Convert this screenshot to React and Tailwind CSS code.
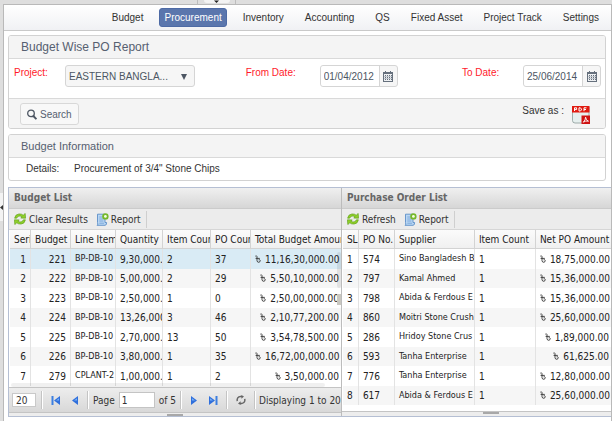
import React from "react";

const nav = ["Budget", "Procurement", "Inventory", "Accounting", "QS", "Fixed Asset", "Project Track", "Settings"];

const budgets = [
  [1, 221, "BP-DB-10", "9,30,000.", 2, 37, "11,16,30,000.00"],
  [2, 222, "BP-DB-10", "5,00,000.", 2, 29, "5,50,10,000.00"],
  [3, 223, "BP-DB-10", "2,50,000.", 1, 0, "2,50,00,000.00"],
  [4, 224, "BP-DB-10", "13,26,000", 3, 46, "2,10,77,200.00"],
  [5, 225, "BP-DB-10", "2,70,000.", 13, 50, "3,54,78,500.00"],
  [6, 226, "BP-DB-10", "3,80,000.", 1, 35, "16,72,00,000.00"],
  [7, 279, "CPLANT-2", "1,00,000.", 1, 2, "3,50,000.00"],
];

const orders = [
  [1, 574, "Sino Bangladesh B", 1, "18,75,000.00"],
  [2, 797, "Kamal Ahmed", 1, "15,36,000.00"],
  [3, 798, "Abida & Ferdous E", 1, "15,36,000.00"],
  [4, 860, "Moitri Stone Crush", 1, "25,60,000.00"],
  [5, 286, "Hridoy Stone Crus", 1, "1,89,000.00"],
  [6, 593, "Tanha Enterprise", 1, "61,625.00"],
  [7, 776, "Tanha Enterprise", 1, "12,80,000.00"],
  [8, 617, "Abida & Ferdous E", 1, "25,60,000.00"],
];

function TakaIcon() {
  return (
    <svg width="6" height="8" viewBox="0 0 6 8" className="mr-1 inline-block align-baseline" fill="none" stroke="#333" strokeWidth="0.9" role="img" aria-label="taka">
      <path d="M0.4 1.2Q1.6 0.2 2 1.6V5.6Q2.2 7.4 3.8 7.3Q5.4 7 5.2 5.4Q4.8 4.2 3.6 4.8M0.6 3.4H4.8" />
    </svg>
  );
}

function Calendar() {
  return (
    <svg width="10" height="11" viewBox="0 0 10 11" aria-hidden="true">
      <path fill="#66707d" d="M0 1h2V0h1v1h4V0h1v1h2v10H0z" />
      <path fill="#eef0f2" d="M1 3H9V10H1z" />
      <path stroke="#66707d" strokeWidth="1" strokeDasharray="1 1" d="M2 4.5H9M2 6.5H9M2 8.5H9" />
      <path stroke="#a3abb5" strokeWidth="0.6" d="M1 5.5H9M1 7.5H9" />
    </svg>
  );
}

function DateField({ id, value }) {
  return (
    <div className="flex h-[22px] rounded-[3px] border border-[#d5d5d5] bg-[#f6f6f6]">
      <input id={id} defaultValue={value} className="w-[58px] rounded-l-[3px] bg-white pl-[3px] text-[10px] text-[#4d5663] outline-none" />
      <button aria-label="Open calendar" className="flex w-[18px] items-center justify-center border-l border-[#d5d5d5]">
        <Calendar />
      </button>
    </div>
  );
}

function RefreshIcon() {
  return (
    <svg width="12" height="12" viewBox="0 0 12 12" aria-hidden="true">
      <g fill="#8fd02a" stroke="#5a9a14" strokeWidth="0.6" strokeLinejoin="round">
        <path d="M0.6 5.2Q1.2 1.2 5 0.9Q7.8 0.8 9.2 2.2L11.2 0.4L11.6 5.2L6.8 5.1L8 3.7Q6 2.4 4.2 3.4Q3.2 4 2.6 5.2z" />
        <path d="M11.4 6.8Q10.8 10.8 7 11.1Q4.2 11.2 2.8 9.8L0.8 11.6L0.4 6.8L5.2 6.9L4 8.3Q6 9.6 7.8 8.6Q8.8 8 9.4 6.8z" />
      </g>
    </svg>
  );
}

function ReportIcon() {
  return (
    <svg width="13" height="13" viewBox="0 0 13 13" aria-hidden="true">
      <path fill="#b9d6f3" stroke="#5c8fc7" strokeWidth="0.9" d="M1.5 1.2H9V9.5H10.6Q10.8 12.2 9 12.3H1Q2.4 11.6 1.5 9.5z" />
      <path stroke="#6f9fd4" strokeWidth="0.8" d="M3.3 4H6M3.3 6H7.4M3.3 8H7.4M3.3 10.2H8" />
      <circle cx="9.4" cy="3.4" r="3.2" fill="#76b82a" />
      <circle cx="9.4" cy="3.4" r="1.4" fill="#f4ffe2" />
    </svg>
  );
}

function Tools({ first }) {
  return (
    <div className="flex h-[21px] items-center border-b border-[#d6d6d6] bg-[#ececec] pl-[5px]">
      <button className="flex items-center gap-[3px]"><RefreshIcon />{first}</button>
      <button className="ml-2 flex items-center gap-[2px]"><ReportIcon />Report</button>
      <span className="ml-[5px] h-[17px] border-l border-[#cfcfcf]" />
    </div>
  );
}

function ListTitle({ children }) {
  return (
    <h2 className="h-[21px] border-b border-[#cbcbcb] bg-linear-to-b from-[#f0f0f0] to-[#d6d6d6] pl-[5px] text-[10px] leading-[20px] font-bold text-[#666]">
      {children}
    </h2>
  );
}

const head = "h-[19px] overflow-hidden border-r border-b border-[#d3d3d3] bg-linear-to-b from-[#fbfbfb] to-[#f0f0f0] p-0 pl-1 text-left font-normal last:border-r-0";
const cell = "overflow-hidden border-r border-[#e3e3e3] p-0 pl-1 last:border-r-0 last:pr-[2px] last:text-right";

function Grid({ widths, titles, rows, selected, rightCols }) {
  return (
    <table className="w-full table-fixed border-separate border-spacing-0 whitespace-nowrap text-[#222]">
      <colgroup>
        {widths.map((w, i) => <col key={i} style={w ? { width: w } : undefined} />)}
      </colgroup>
      <thead>
        <tr>{titles.map((t) => <th key={t} className={head}>{t}</th>)}</tr>
      </thead>
      <tbody>
        {rows.map((r, n) => (
          <tr key={n} className={n === selected ? "h-[20px] bg-[#d9ebf5]" : "odd:h-[20px] even:h-[19px] even:bg-[#f6f6f6]"}>
            {r.map((v, i) => (
              <td key={i} className={rightCols.includes(i) ? cell + " pr-1 text-right" : i === 2 ? cell + " text-[9px]" : cell}>
                {i === r.length - 1 && <TakaIcon />}{v}
              </td>
            ))}
          </tr>
        ))}
      </tbody>
    </table>
  );
}

function PageArrow({ label, bar, flip }) {
  return (
    <button aria-label={label} className="flex w-[10px] justify-center">
      <svg width="10" height="9" viewBox="0 0 10 9" className={flip ? "-scale-x-100" : ""} aria-hidden="true">
        {bar && <path fill="#3c7fe0" d="M0.5 0H2.5V9H0.5z" />}
        <path fill="#2f6fdc" d="M9 0V9L3 4.5z" />
        <path fill="#79b2f5" d="M8 2.2V4.5H5z" />
      </svg>
    </button>
  );
}

function Divider() {
  return <span className="h-[18px] w-[2px] shrink-0 border-l border-[#c4c4c4] bg-white" />;
}

export default function App() {
  return (
    <div className="border-b border-[#bdbdbd] bg-[#dedede] pl-[3px] font-['Liberation_Sans',Arial,sans-serif] text-[10px] text-[#333]">
      <div className="flex h-1 justify-center pr-[184px]">
        <span className="ml-[2px] flex w-[39px] justify-center border-x border-[#bdbdbd]">
          <span className="flex h-[3px] w-[26px] justify-center rounded-b bg-[#f3f3f3]">
            <svg width="5" height="3" viewBox="0 0 5 3" aria-hidden="true"><path d="M0 0.5H5L2.5 3z" fill="#222" /></svg>
          </span>
        </span>
      </div>
      <div className="absolute top-[193px] left-0 flex h-[28px] w-[3px] items-center bg-[#f3f3f3]">
        <svg width="3" height="5" viewBox="0 0 3 5" aria-hidden="true"><path d="M3 0V5L0 2.5z" fill="#333" /></svg>
      </div>
      <main className="border border-b-0 border-[#b9b9b9] bg-white">
        <nav className="flex h-[26px] items-center justify-end gap-[11px] border-b border-[#c9c9c9] bg-linear-to-b from-white to-[#f0f1f4] pr-[7px]">
          {nav.map((n) => (
            <a
              key={n}
              href="#"
              className={n === "Procurement"
                ? "rounded-[3px] border border-[#4d6aa5] bg-[#5a76ad] px-1 leading-[17px] text-white"
                : "px-[5px] leading-[19px]"}
            >
              {n}
            </a>
          ))}
        </nav>

        <div className="flex flex-col gap-[5px] pt-1 pr-[5px] pl-1">
          <section className="overflow-hidden rounded-[3px] border border-[#d2d2d2]">
            <h1 className="h-[23px] border-b border-[#d9d9d9] bg-[#f4f4f4] pl-3 text-[12px] leading-[23px] text-[#566070]">Budget Wise PO Report</h1>
            <div className="grid h-[39px] grid-cols-[15fr_14fr_auto] items-start pt-[6px] pr-1 pl-[5px] text-[#ff1a2b]">
              <div className="flex">
                <label htmlFor="project" className="w-[51px] leading-[16px]">Project:</label>
                <div className="relative">
                  <select id="project" className="h-[22px] w-[130px] appearance-none rounded-[3px] border border-[#d5d5d5] bg-[#f6f6f6] pl-[3px] text-[10px] text-[#4d5663]">
                    <option>EASTERN BANGLA...</option>
                  </select>
                  <svg width="6" height="6" viewBox="0 0 6 6" className="pointer-events-none absolute top-[9px] right-2" aria-hidden="true"><path d="M0 0H6L3 6z" fill="#4d5663" /></svg>
                </div>
              </div>
              <div className="flex">
                <label htmlFor="from" className="w-[74px] leading-[16px]">From Date:</label>
                <DateField id="from" value="01/04/2012" />
              </div>
              <div className="flex">
                <label htmlFor="to" className="w-[61px] leading-[16px]">To Date:</label>
                <DateField id="to" value="25/06/2014" />
              </div>
            </div>
            <div className="flex h-[30px] items-start justify-between border-t border-[#d9d9d9] bg-[#f4f4f4] pt-1 pr-[15px] pl-[11px]">
              <button className="flex h-[22px] items-center gap-[3px] rounded-[3px] border border-[#d8d8d8] bg-[#f8f8f8] px-[6px] text-[#566070]">
                <svg width="10" height="11" viewBox="0 0 10 11" fill="none" stroke="#4d5663" aria-hidden="true"><circle cx="4" cy="4.4" r="3.3" strokeWidth="1.3" /><path d="M6.4 7L9.4 10.2" strokeWidth="1.9" /></svg>
                Search
              </button>
              <div className="flex gap-2">
                <span className="leading-[15px]">Save as :</span>
                <button aria-label="Save as PDF" className="pt-[3px]">
                  <svg width="18" height="18" viewBox="0 0 18 18" aria-hidden="true">
                    <path fill="#e6efee" stroke="#8a9a98" strokeWidth="0.8" d="M0.5 1H17V17H3Q0.5 17 0.5 14.5z" />
                    <path fill="#e01a10" d="M0 0H17.5V6.5H0z" />
                    <g stroke="#fff" strokeWidth="1" fill="none"><path d="M2.5 5V1.8H4.6V3.6H2.5M7 5V1.8H8.4L9.4 3V4L8.4 5zM12 5.2V1.8H14.5M12 3.5H14" /></g>
                    <path fill="#cf1212" d="M9.5 9.5H18V18H9.5z" />
                    <path stroke="#fff" strokeWidth="0.9" fill="none" d="M11.3 16.2Q13.6 14 13.6 11.2Q14 14.6 16.5 15.2Q13.6 14.4 11.3 16.2z" />
                  </svg>
                </button>
              </div>
            </div>
          </section>

          <section className="overflow-hidden rounded-[3px] border border-[#d2d2d2]">
            <h2 className="h-[23px] border-b border-[#d9d9d9] bg-[#f4f4f4] pl-3 text-[11px] leading-[23px] text-[#566070]">Budget Information</h2>
            <dl className="flex h-[22px] pl-[17px] leading-[22px]">
              <dt className="w-[48px]">Details:</dt>
              <dd>Procurement of 3/4" Stone Chips</dd>
            </dl>
          </section>
        </div>

        <div className="mt-[6px] ml-1 flex h-[230px] border-y border-l border-[#b5bfd3] font-['DejaVu_Sans_Condensed','DejaVu_Sans',Tahoma,sans-serif]">
          <section className="flex min-w-0 flex-[333] flex-col overflow-hidden border-r border-[#bcbcbc]">
            <ListTitle>Budget List</ListTitle>
            <Tools first="Clear Results" />
            <div className="relative h-[157px] overflow-hidden pl-[1px]">
              <Grid
                widths={[21, 40, 45, 47, 48, 40, 0]}
                titles={["Seri", "Budget I", "Line Item", "Quantity", "Item Coun", "PO Coun", "Total Budget Amoun"]}
                rows={budgets}
                selected={0}
                rightCols={[0, 1]}
              />
              <span className="absolute top-[22px] right-0 h-[36px] w-1 rounded bg-black/8" />
              <span className="absolute top-[64px] right-0 h-[11px] w-1 bg-[#c9c7c0]" />
              <span className="absolute right-4 bottom-0 left-[2px] h-1 rounded bg-black/6" />
            </div>
            <div className="flex h-[25px] shrink-0 items-center border-t border-[#c4c4c4] bg-linear-to-b from-[#ededed] to-[#d8d8d8] pl-[3px] whitespace-nowrap">
              <input aria-label="Rows per page" defaultValue="20" className="h-[14px] w-[24px] shrink-0 border border-[#c9c9c9] bg-white pl-[3px] text-[10px]" />
              <div className="ml-[5px] flex shrink-0 items-center gap-2">
                <Divider />
                <PageArrow label="First page" bar />
                <PageArrow label="Previous page" />
              </div>
              <div className="ml-2 flex shrink-0 items-center gap-1">
                <Divider />
                <label htmlFor="page">Page</label>
                <input id="page" defaultValue="1" className="h-[16px] w-[36px] border border-[#c4c4c4] bg-white pl-[2px] text-[10px]" />
                <span>of 5</span>
                <Divider />
              </div>
              <div className="ml-2 flex shrink-0 items-center gap-2">
                <PageArrow label="Next page" flip />
                <PageArrow label="Last page" bar flip />
                <Divider />
                <button aria-label="Reload">
                  <svg width="10" height="10" viewBox="0 0 10 10" fill="none" stroke="#666" strokeWidth="1.5" aria-hidden="true">
                    <path d="M1.2 6.2Q0.6 1.8 4.6 1.6H6M8.8 3.8Q9.4 8.2 5.4 8.4H4" />
                    <path d="M5.4 0L8 1.6L5.4 3.8zM4.6 6.2L2 8.4L4.6 10z" fill="#666" stroke="none" />
                  </svg>
                </button>
                <Divider />
              </div>
              <span className="ml-[3px]">Displaying 1 to 20 o</span>
            </div>
            <div className="flex flex-1 items-center justify-center border-t border-[#c4c4c4] bg-[#ededed]">
              <span className="h-[2px] w-4 bg-[#a8a8a8]" />
            </div>
          </section>

          <section className="flex min-w-0 flex-[270] flex-col overflow-hidden">
            <ListTitle>Purchase Order List</ListTitle>
            <Tools first="Refresh" />
            <div className="h-[181px] overflow-hidden pl-[1px]">
              <Grid
                widths={[16, 36, 80, 61, 0]}
                titles={["SL", "PO No.", "Supplier", "Item Count", "Net PO Amount"]}
                rows={orders}
                selected={-1}
                rightCols={[]}
              />
            </div>
            <div className="flex flex-1 items-start justify-center border-t border-[#c4c4c4] bg-[#ededed] pl-[30px]">
              <span className="h-[2px] w-4 bg-[#a8a8a8]" />
            </div>
          </section>
        </div>
        <div className="h-1" />
      </main>
    </div>
  );
}
